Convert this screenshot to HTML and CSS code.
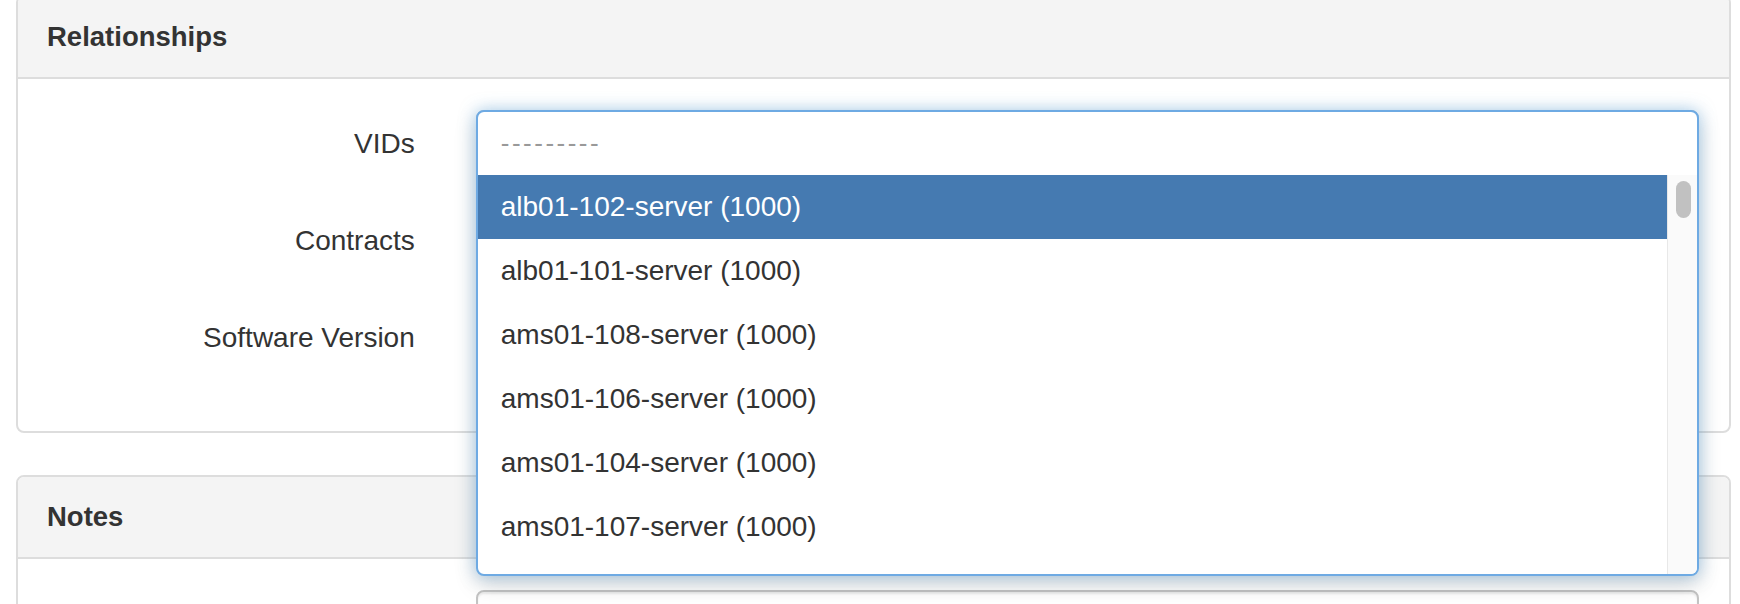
FILE: index.html
```html
<!DOCTYPE html>
<html lang="en">
<head>
    <meta charset="UTF-8">
    <title>Edit Device</title>
    <link rel="stylesheet" href="styles.css">
</head>
<body>

<div class="page">
    <div class="panel">
        <div class="panel-heading"><strong>Relationships</strong></div>
        <div class="panel-body">
            <div class="form-row">
                <label class="row-label">VIDs</label>
                <div class="row-control">
                    <div class="form-control"></div>

                    <div class="combo">
                        <div class="combo-search">---------</div>
                        <div class="combo-list">
                            <div class="combo-options">
                                <div class="option selected">alb01-102-server (1000)</div>
                                <div class="option">alb01-101-server (1000)</div>
                                <div class="option">ams01-108-server (1000)</div>
                                <div class="option">ams01-106-server (1000)</div>
                                <div class="option">ams01-104-server (1000)</div>
                                <div class="option">ams01-107-server (1000)</div>
                            </div>
                            <div class="scroll-track"><div class="scroll-thumb"></div></div>
                        </div>
                    </div>
                </div>
            </div>
            <div class="form-row">
                <label class="row-label">Contracts</label>
                <div class="row-control"><div class="form-control"></div></div>
            </div>
            <div class="form-row">
                <label class="row-label">Software Version</label>
                <div class="row-control"><div class="form-control"></div></div>
            </div>
        </div>
    </div>

    <div class="panel">
        <div class="panel-heading"><strong>Notes</strong></div>
        <div class="panel-body">
            <div class="form-row">
                <div class="row-label"></div>
                <div class="row-control"><div class="textarea"></div></div>
            </div>
        </div>
    </div>
</div>

</body>
</html>
```

FILE: styles.css
```css
body {
    margin: 0;
    background: #ffffff;
    font-family: "Liberation Sans", Arial, sans-serif;
    font-size: 28px;
    color: #333333;
    overflow: hidden;
}
.page {
    margin: -5px 9px 0 16px;
}
.panel {
    border: 2px solid #dddddd;
    border-radius: 8px;
    margin-bottom: 42px;
    background: #ffffff;
}
.panel-heading {
    background: #f4f4f4;
    border-bottom: 2px solid #dddddd;
    border-radius: 6px 6px 0 0;
    padding: 21px 29px;
    line-height: 38px;
    font-size: 27.5px;
}
.panel-body {
    padding: 31px 0 30px 0;
}
.form-row {
    display: grid;
    grid-template-columns: 25% 75%;
    height: 67px;
    margin-bottom: 30px;
}
.row-label {
    text-align: right;
    padding-right: 31px;
    line-height: 67px;
    font-size: 28px;
}
.row-control {
    position: relative;
    padding: 0 30px;
}
.form-control {
    height: 67px;
    border: 2px solid #cccccc;
    border-radius: 8px;
    box-sizing: border-box;
}
.textarea {
    height: 200px;
    border: 2px solid #c4c4c4;
    border-radius: 8px;
    box-shadow: inset 0 2px 2px rgba(0, 0, 0, 0.075);
}

/* open dropdown over the VIDs field */
.combo {
    position: absolute;
    top: 0;
    left: 30px;
    right: 30px;
    height: 466px;
    box-sizing: border-box;
    border: 2px solid #6eaae3;
    border-radius: 8px;
    background: #ffffff;
    box-shadow: 0 0 16px rgba(102, 175, 233, 0.5), 0 8px 22px rgba(0, 0, 0, 0.18);
    overflow: hidden;
    z-index: 10;
}
.combo-search {
    height: 63px;
    line-height: 63px;
    padding-left: 23px;
    color: #999999;
    letter-spacing: 2.5px;
    font-size: 26px;
}
.combo-list {
    display: flex;
    height: 399px;
}
.combo-options {
    flex: 1;
    overflow: hidden;
}
.option {
    height: 64px;
    line-height: 64px;
    padding-left: 23px;
    font-size: 28px;
    white-space: nowrap;
}
.option.selected {
    background: #457ab1;
    color: #ffffff;
}
.scroll-track {
    width: 29px;
    background: #fafafa;
    border-left: 1px solid #e8e8e8;
    position: relative;
}
.scroll-thumb {
    position: absolute;
    top: 6px;
    left: 8px;
    width: 15px;
    height: 37px;
    border-radius: 8px;
    background: #c1c1c1;
}
```
